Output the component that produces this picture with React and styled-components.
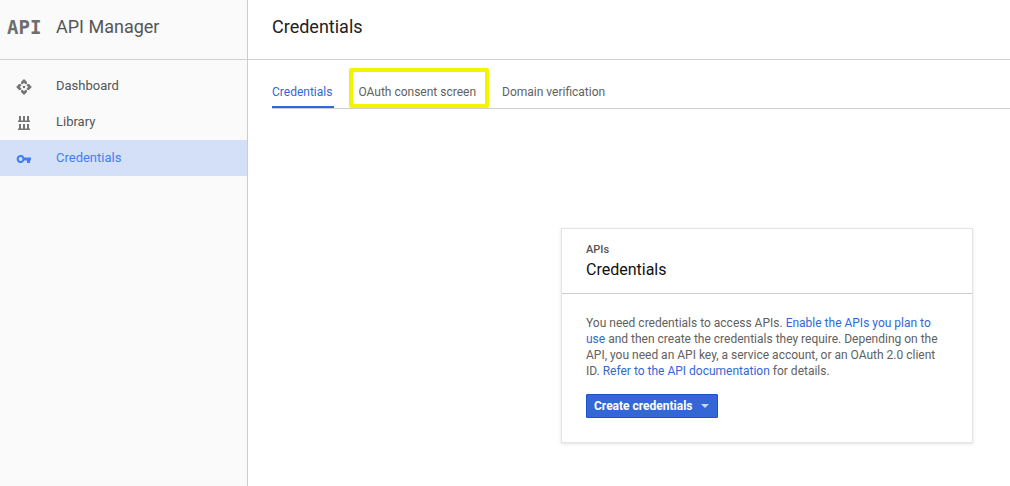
import React, { useState } from 'react'
import styled, { createGlobalStyle } from 'styled-components';

const GlobalStyle = createGlobalStyle`
    * {
        box-sizing: border-box;
    }
    body {
        margin: 0;
        background: #fff;
        font-family: Roboto, 'Liberation Sans', sans-serif;
        color: #555;
    }
    a {
        color: #3367d6;
        text-decoration: none;
    }
`;

const Page = styled.div`
    display: flex;
    min-height: 100vh;
`;

const Sidebar = styled.aside`
    flex: none;
    width: 248px;
    background: #fafafa;
    border-right: 1px solid #ccc;
`;

const SidebarHeader = styled.div`
    display: flex;
    align-items: center;
    height: 60px;
    padding-bottom: 6px;
    border-bottom: 1px solid #d0d0d0;
`;

const Logo = styled.span`
    width: 56px;
    padding-left: 7px;
    font-family: 'DejaVu Sans Mono', monospace;
    font-size: 19px;
    font-weight: bold;
    color: #6e6e6e;
`;

const Product = styled.span`
    font-size: 18px;
`;

const Nav = styled.nav`
    padding-top: 8px;
`;

const NavItem = styled.a`
    display: flex;
    align-items: center;
    height: 36px;
    padding: 0 0 2px 16px;
    font-size: 13px;
    background: ${props => props.$active ? '#d4e0f7' : 'transparent'};
    color: ${props => props.$active ? '#427fed' : '#555'};

    svg {
        width: 16px;
        height: 16px;
        margin: 4px 24px 0 0;
        fill: ${props => props.$active ? '#427fed' : '#757575'};
    }
`;

const Main = styled.main`
    flex: 1;
    min-width: 0;
`;

const MainHeader = styled.header`
    display: flex;
    align-items: center;
    height: 60px;
    padding: 0 24px 6px;
    border-bottom: 1px solid #d0d0d0;
`;

const Title = styled.h1`
    margin: 0;
    font-size: 18px;
    font-weight: 400;
    color: #212121;
`;

const Tabs = styled.div`
    display: flex;
    gap: 24px;
    margin: 16px 0 0 24px;
    border-bottom: 1px solid #ccc;
`;

const Tab = styled.button`
    position: relative;
    height: 32px;
    padding: 2px 2px 0 0;
    border: none;
    border-bottom: 2px solid ${props => props.$active ? '#3367d6' : 'transparent'};
    background: none;
    font-family: inherit;
    font-size: 12px;
    color: ${props => props.$active ? '#3367d6' : '#616161'};
    cursor: pointer;
`;

const Highlight = styled.span`
    position: absolute;
    inset: -8px -11px -2px -9px;
    border: 4px solid #f4f400;
    border-radius: 2px;
    pointer-events: none;
`;

const Content = styled.div`
    display: flex;
    justify-content: flex-end;
    padding: 120px 38px 40px 24px;
`;

const Card = styled.section`
    width: 410px;
    background: #fff;
    box-shadow: 0 0 0 1px #e4e4e4, 0 1px 3px 1px rgba(0, 0, 0, 0.12);
`;

const CardHeader = styled.div`
    padding: 12px 24px;
    border-bottom: 1px solid #ccc;
`;

const Overline = styled.div`
    font-size: 11px;
    font-weight: 500;
    line-height: 18px;
`;

const CardTitle = styled.h2`
    margin: 0;
    font-size: 16px;
    font-weight: 400;
    line-height: 22px;
    color: #111;
`;

const CardBody = styled.div`
    padding: 21px 24px 24px;
`;

const Text = styled.p`
    margin: 0 0 15px;
    font-size: 12px;
    line-height: 16px;
    color: #616161;
`;

const CreateButton = styled.button`
    display: flex;
    align-items: center;
    gap: 8px;
    height: 24px;
    padding: 0 8px 0 7px;
    border: 1px solid #1a53cc;
    border-radius: 1px;
    background: #3367d6;
    color: #fff;
    font-family: inherit;
    font-size: 12px;
    font-weight: 700;
    cursor: pointer;
`;

function DashboardIcon() {
    return (
        <svg viewBox="0 0 16 16" aria-hidden="true">
            <path d="M7.4.6Q8 0 8.6.6L11 3v1.4L9.8 5.6 8 3.8 6.2 5.6 5 4.4V3z" />
            <path d="M7.4 15.4q.6.6 1.2 0L11 13v-1.4l-1.2-1.2L8 12.2l-1.8-1.8L5 11.6V13z" />
            <path d="M.6 7.4Q0 8 .6 8.6L3 11h1.4l1.2-1.2L3.8 8l1.8-1.8L4.4 5H3z" />
            <path d="M15.4 7.4q.6.6 0 1.2L13 11h-1.4l-1.2-1.2L12.2 8l-1.8-1.8L11.6 5H13z" />
            <circle cx="8" cy="8" r="1.3" />
        </svg>
    )
}

function LibraryIcon() {
    return (
        <svg viewBox="0 0 16 16" aria-hidden="true">
            <path d="M3 1h2v4.5h2V1h2v4.5h2V1h2v4.5h1V7H2V5.500h1z" />
            <path d="M3 9h2v4.500h2V9h2v4.500h2V9h2v4.500h1V15H2v-1.500h1z" />
        </svg>
    )
}

function KeyIcon() {
    return (
        <svg viewBox="0 0 16 16" aria-hidden="true">
            <path fillRule="evenodd" d="M8.300 6.400H15v3.200h-1V12h-3V9.600H8.300a4 4 0 1 1 0-3.200zM4.600 6.100a1.900 1.900 0 1 0 0 3.800 1.900 1.900 0 0 0 0-3.800z" />
        </svg>
    )
}

function ArrowIcon() {
    return (
        <svg width="8" height="4" viewBox="0 0 8 4" fill="#c9d7f5" aria-hidden="true">
            <path d="M0 0h8L4 4z" />
        </svg>
    )
}

const navItems = [
    { name: 'Dashboard', Icon: DashboardIcon },
    { name: 'Library', Icon: LibraryIcon },
    { name: 'Credentials', Icon: KeyIcon },
];

const tabs = ['Credentials', 'OAuth consent screen', 'Domain verification'];

function App() {

    const [tab, setTab] = useState('Credentials');

    return (
        <Page>
            <GlobalStyle />
            <Sidebar>
                <SidebarHeader>
                    <Logo>API</Logo>
                    <Product>API Manager</Product>
                </SidebarHeader>
                <Nav>
                    {navItems.map(({ name, Icon }) => (
                        <NavItem key={name} href="#" $active={name === 'Credentials'}>
                            <Icon />
                            {name}
                        </NavItem>
                    ))}
                </Nav>
            </Sidebar>
            <Main>
                <MainHeader>
                    <Title>Credentials</Title>
                </MainHeader>
                <Tabs role="tablist">
                    {tabs.map(name => (
                        <Tab
                            key={name}
                            role="tab"
                            aria-selected={tab === name}
                            $active={tab === name}
                            onClick={() => setTab(name)}
                        >
                            {name}
                            {name === 'OAuth consent screen' && <Highlight />}
                        </Tab>
                    ))}
                </Tabs>
                <Content>
                    <Card>
                        <CardHeader>
                            <Overline>APIs</Overline>
                            <CardTitle>Credentials</CardTitle>
                        </CardHeader>
                        <CardBody>
                            <Text>
                                You need credentials to access APIs. <a href="#">Enable the APIs you plan to use</a> and
                                then create the credentials they require. Depending on the API, you need an API key, a
                                service account, or an OAuth 2.0 client ID. <a href="#">Refer to the API documentation</a> for
                                details.
                            </Text>
                            <CreateButton>
                                Create credentials
                                <ArrowIcon />
                            </CreateButton>
                        </CardBody>
                    </Card>
                </Content>
            </Main>
        </Page>
    )
}
export default App;
